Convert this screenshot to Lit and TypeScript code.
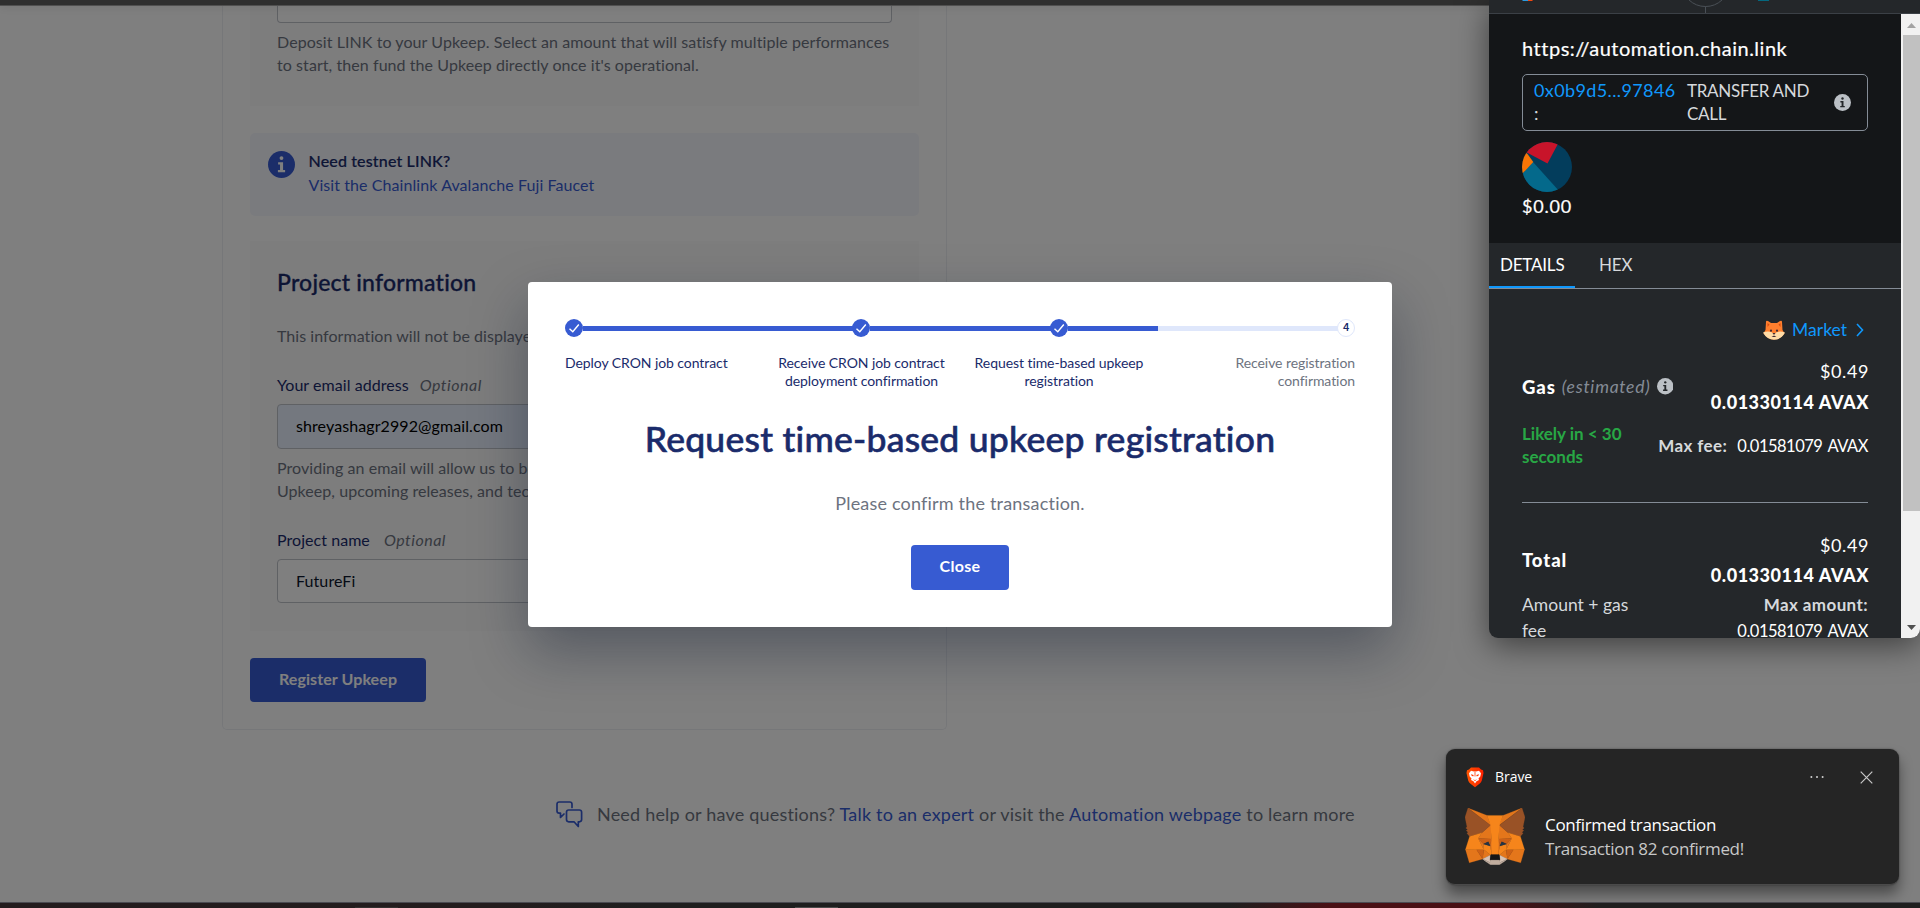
import { LitElement, html, css, svg } from 'lit';
import { customElement } from 'lit/decorators.js';

const FOX: [string, string[]][] = [
  ['#e2761b', ['274.1,35.5 174.6,109.4 193,65.8']],
  ['#e4761b', [
    '44.4,35.5 143.1,110.1 125.6,65.8', '238.3,206.8 211.8,247.4 268.5,263 284.8,207.7',
    '33.9,207.7 50.1,263 106.8,247.4 80.3,206.8', '103.6,138.2 87.8,162.1 144.1,164.6 142.1,104.1',
    '214.9,138.2 175.9,103.4 174.6,164.6 230.8,162.1', '106.8,247.4 140.6,230.9 111.4,208.1',
    '177.9,230.9 211.8,247.4 207.1,208.1']],
  ['#d7c1b3', ['211.8,247.4 177.9,230.9 180.6,253 180.3,262.3', '106.8,247.4 138.3,262.3 138.1,253 140.6,230.9']],
  ['#cd6116', [
    '106.8,247.4 111.6,206.8 80.3,207.7', '207,206.8 211.8,247.4 238.3,207.7',
    '230.8,162.1 174.6,164.6 179.8,193.5 188.1,176.1 208.1,185.2',
    '110.6,185.2 130.6,176.1 138.8,193.5 144.1,164.6 87.8,162.1']],
  ['#e4751f', [
    '87.8,162.1 111.4,208.1 110.6,185.2', '208.1,185.2 207.1,208.1 230.8,162.1',
    '144.1,164.6 138.8,193.5 145.4,227.6 146.9,182.7', '174.6,164.6 171.9,182.6 173.1,227.6 179.8,193.5']],
  ['#f6851b', ['179.8,193.5 173.1,227.6 177.9,230.9 207.1,208.1 208.1,185.2', '110.6,185.2 111.4,208.1 140.6,230.9 145.4,227.6 138.8,193.5']],
  ['#233447', ['138.8,193.5 110.6,185.2 130.5,176.1', '179.7,193.5 188,176.1 208,185.2']],
  ['#c0ad9e', ['180.3,262.3 180.6,253 178.1,250.8 140.4,250.8 138.1,253 138.3,262.3 106.8,247.4 117.8,256.4 140.1,271.9 178.4,271.9 200.8,256.4 211.8,247.4']],
  ['#161616', ['177.9,230.9 173.1,227.6 145.4,227.6 140.6,230.9 138.1,253 140.4,250.8 178.1,250.8 180.6,253']],
  ['#995226', [
    '278.3,114.2 286.8,73.4 274.1,35.5 177.9,106.9 214.9,138.2 267.2,153.5 278.8,140 273.8,136.4 281.8,129.1 275.6,124.3 283.6,118.2',
    '31.8,73.4 40.3,114.2 34.9,118.2 42.9,124.3 36.8,129.1 44.8,136.4 39.8,140 51.3,153.5 103.6,138.2 140.6,106.9 44.4,35.5']],
  ['#f6851b', [
    '267.2,153.5 214.9,138.2 230.8,162.1 207.1,208.1 238.3,207.7 284.8,207.7',
    '103.6,138.2 51.3,153.5 33.9,207.7 80.3,207.7 111.4,208.1 87.8,162.1',
    '174.6,164.6 177.9,106.9 193.1,65.8 125.6,65.8 140.6,106.9 144.1,164.6 145.3,182.8 145.4,227.6 173.1,227.6 173.3,182.8']],
];

const infoIcon = (size: number, disc: string, glyph: string) => html`
  <svg width=${size} height=${size} viewBox="0 0 24 24">
    <circle cx="12" cy="12" r="12" fill=${disc} />
    <circle cx="12" cy="6.3" r="1.7" fill=${glyph} />
    <path d="M9 10h4.400v6.800h1.800v2H8.800v-2h1.900v-4.800H9z" fill=${glyph} />
  </svg>`;

@customElement('upkeep-page')
class UpkeepPage extends LitElement {
  static styles = css`
    :host { display: block; width: 1920px; height: 903px; background: #fff; color: #6d7380;
      font: 16px/24px Lato, sans-serif; letter-spacing: .05px; box-sizing: border-box; padding-top: 6px; overflow: hidden; }
    * { box-sizing: border-box; }
    .card { width: 725px; height: 724px; margin-left: 222px; padding: 0 27px; border: 1px solid #edeff3; border-top: 0; border-radius: 0 0 5px 5px; }
    .section { background: #fafafb; padding: 0 27px; }
    .funding { height: 100px; }
    .help { line-height: 23.400px; white-space: pre; }
    .funding .help { letter-spacing: .07px; }
    .input { height: 44.500px; border: 1px solid #bfc2c9; border-radius: 4px; background: #fff; color: #0c162c;
      padding: 0 18px; line-height: 41px; letter-spacing: .09px; }
    .input.amount { height: 16.500px; border-top: 0; border-radius: 0 0 4px 4px; margin-bottom: 7px; width: 615px; }
    .input.filled { background: #e8f0fe; color: #000; }
    .notice { display: flex; gap: 13.500px; height: 83px; margin: 27px 0 25px; padding: 15px 0 0 18px; background: #f5f7fd; border-radius: 5px; }
    .notice svg { margin-top: 3px; }
    .notice p { margin: 0; line-height: 24px; }
    .notice .strong { padding-top: 1px; }
    .strong { color: #1a2b6b; font-weight: 500; letter-spacing: .15px; -webkit-text-stroke: .2px #1a2b6b; }
    .link { color: #375bd2; }
    .notice .link { letter-spacing: .08px; }
    .project { height: 390px; padding-top: 26px; }
    h2 { margin: 0 0 27px; font-size: 23px; line-height: 30px; font-weight: 500; color: #1a2b6b; letter-spacing: .2px; -webkit-text-stroke: .3px #1a2b6b; }
    .label { color: #1a2b6b; display: flex; gap: 11px; margin: 25px 0 7px; }
    .label i { color: #6d7380; letter-spacing: .5px; }
    .label.name { margin: 26px 0 6.500px; gap: 14px; }
    .input + .help { margin-top: 7px; }
    .register { margin-top: 27px; width: 176px; height: 44px; border-radius: 4px; background: #375bd2; color: #fff; font-weight: 700;
      text-align: center; line-height: 42px; letter-spacing: .09px; }
    .footer { display: flex; gap: 14px; align-items: center; height: 28px; margin: 70.500px 0 0 556px; font-size: 18px; letter-spacing: .2px; }
    .footer span { position: relative; }
    .footer > span { padding-bottom: 2px; }
  `;
  render() {
    return html`
      <div class="card">
        <div class="section funding">
          <div class="input amount"></div>
          <div class="help">Deposit LINK to your Upkeep. Select an amount that will satisfy multiple performances
to start, then fund the Upkeep directly once it's operational.</div>
        </div>
        <div class="notice">
          ${infoIcon(27, '#375bd2', '#fff')}
          <div><p class="strong">Need testnet LINK?</p><p class="link">Visit the Chainlink Avalanche Fuji Faucet</p></div>
        </div>
        <div class="section project">
          <h2>Project information</h2>
          <div>This information will not be displayed</div>
          <div class="label">Your email address <i>Optional</i></div>
          <div class="input filled">shreyashagr2992@gmail.com</div>
          <div class="help">Providing an email will allow us to be
Upkeep, upcoming releases, and tech</div>
          <div class="label name">Project name <i>Optional</i></div>
          <div class="input">FutureFi</div>
        </div>
        <div class="register">Register Upkeep</div>
      </div>
      <div class="footer">
        <svg width="27" height="27" viewBox="0 0 27 27" fill="none" stroke="#375bd2" stroke-width="1.7" stroke-linejoin="round" stroke-linecap="round">
          <path d="M16 6.500V3.200Q16 1 13.800 1H3.200Q1 1 1 3.200V10Q1 12.200 3.200 12.200H4.500V16.500L8 13" />
          <path d="M12.700 9H23.300Q25.600 9 25.600 11.200V18.600Q25.600 20.800 23.300 20.800H22.300V25.500L18 20.800H12.700Q10.500 20.800 10.500 18.600V11.200Q10.500 9 12.700 9Z" />
        </svg>
        <span>Need help or have questions? <span class="link">Talk to an expert</span> or visit the <span class="link">Automation webpage</span> to learn more</span>
      </div>`;
  }
}

@customElement('progress-dialog')
class ProgressDialog extends LitElement {
  static styles = css`
    :host { display: block; box-sizing: border-box; width: 864px; height: 345px; padding: 37px 37px 0; background: #fff; border-radius: 4px;
      box-shadow: 0 24px 56px rgba(12, 22, 44, .36); font-family: Lato, sans-serif; text-align: center; }
    .track { display: flex; align-items: center; height: 18px; }
    .dot { width: 18px; height: 18px; border-radius: 50%; background: #375bd2; flex: none; }
    .dot svg { display: block; }
    .dot.next { background: #fff; border: 1px solid #dfe7fb; box-sizing: border-box; color: #1a2b6b; font: 600 10px/15px Inter, sans-serif; }
    .bar { height: 5px; background: #375bd2; margin: 0 -.5px; }
    .long { width: 270px; }
    .short { width: 181px; }
    .half { width: 90.500px; margin-right: 0; }
    .rest { flex: 1; background: #dfe7fb; margin-left: 0; }
    .labels { display: grid; grid-template-columns: 198px 197px 198px 197px; margin-top: 16.500px; font-size: 14px; line-height: 18.300px; color: #1a2b6b; letter-spacing: -.07px; white-space: pre; }
    .first { text-align: left; }
    .last { text-align: right; color: #6d7380; }
    h1 { margin: 27px 0 28px; font-size: 35.500px; line-height: 44px; font-weight: 500; color: #1a2b6b; letter-spacing: .24px; -webkit-text-stroke: .6px #1a2b6b; }
    p { margin: 0 0 27.500px; font-size: 18px; line-height: 28px; color: #6d7380; letter-spacing: .19px; }
    .close { width: 98px; height: 45px; margin: 0 auto; border-radius: 4px; background: #375bd2; color: #fff; font-size: 16px; font-weight: 700; line-height: 42px; letter-spacing: .3px; }
  `;
  render() {
    const done = html`<span class="dot"><svg width="18" height="18" fill="none" stroke="#fff" stroke-width="1.400"><path d="M4.500 9.700L7.800 12.800L13.800 5.500" /></svg></span>`;
    return html`
      <div class="track">${done}<span class="bar long"></span>${done}<span class="bar short"></span>${done}<span class="bar half"></span><span class="bar rest"></span><span class="dot next">4</span></div>
      <div class="labels">
        <span class="first">Deploy CRON job contract</span>
        <span>Receive CRON job contract
deployment confirmation</span>
        <span>Request time-based upkeep
registration</span>
        <span class="last">Receive registration
confirmation</span>
      </div>
      <h1>Request time-based upkeep registration</h1>
      <p>Please confirm the transaction.</p>
      <div class="close">Close</div>`;
  }
}

@customElement('wallet-popup')
class WalletPopup extends LitElement {
  static styles = css`
    :host { display: flex; flex-direction: column; width: 431px; height: 638px; overflow: hidden; background: #24272a; color: #fff;
      border-radius: 0 0 9px 9px; box-shadow: 0 8px 32px rgba(0, 0, 0, .5); font: 17.500px/24px Lato, sans-serif; white-space: nowrap; }
    * { box-sizing: border-box; }
    svg { display: block; flex: none; }
    .header { height: 14px; border-bottom: 1px solid #3b4046; flex: none; }
    .frame { display: flex; height: 624px; }
    .view { width: 412px; }
    .summary { height: 229px; background: #141618; padding: 20px 33px 0; }
    .origin { font-size: 20px; line-height: 28px; letter-spacing: .52px; -webkit-text-stroke: .2px #fff; }
    .method { display: flex; align-items: center; width: 346px; height: 57px; margin: 12px 0 11px; border: 1px solid #848c96; border-radius: 5px;
      padding: 0 16px 0 11px; line-height: 23px; color: #d6d9dc; font-size: 17px; letter-spacing: -.3px; white-space: pre; }
    .address, .name { padding-bottom: 2px; }
    .address { width: 153px; letter-spacing: .38px; font-size: 18px; }
    .blue { color: #1098fc; }
    .name { flex: 1; }
    .value { font-size: 18px; margin-top: 2px; letter-spacing: .8px; -webkit-text-stroke: .2px #fff; }
    .tabs { display: flex; height: 46px; border-bottom: 1px solid #848c96; font-size: 17px; line-height: 44px; letter-spacing: -.2px; }
    .tab { padding: 0 11px; height: 45px; width: 86px; color: #d6d9dc; }
    .tab + .tab { padding-left: 24px; }
    .active { color: #fff; border-bottom: 2px solid #1098fc; }
    .details { padding: 29px 33px 0; }
    .row { display: flex; justify-content: space-between; align-items: center; }
    .market { justify-content: flex-end; gap: 7px; height: 24px; padding-right: 4px; margin-bottom: 13.500px; }
    .market span { margin-right: 2px; }
    .lead { display: flex; align-items: center; font-weight: 900; font-size: 18.500px; letter-spacing: .9px; }
    .lead i { font-weight: 400; font-size: 17.500px; color: #848c96; margin: 0 6px 0 6px; letter-spacing: .75px; }
    .sum { text-align: right; font-size: 18px; line-height: 31px; letter-spacing: .6px; margin-right: -1px; }
    .sum b { display: block; font-weight: 900; letter-spacing: .55px; }
    .timing { margin-top: 4px; height: 46px; }
    .speed { color: #28a745; font-weight: 700; font-size: 17px; line-height: 23px; white-space: pre; letter-spacing: 0; }
    .fee { display: flex; gap: 10px; padding-top: 2px; }
    .fee b, .amount b { color: #d6d9dc; font-size: 17px; letter-spacing: .4px; }
    .fee span, .amount .num { font-size: 16.500px; letter-spacing: -.5px; word-spacing: 2px; }
    .total { margin-top: 34px; border-top: 1px solid #848c96; padding-top: 27px; }
    .total .sum { line-height: 30px; }
    .amount { align-items: flex-start; line-height: 26.500px; margin-top: 2px; color: #d6d9dc; white-space: pre; }
    .amount div + div { text-align: right; }
    .num { color: #fff; }
    .scrollbar { width: 19px; background: #f1f1f1; display: flex; flex-direction: column; align-items: flex-end; justify-content: space-between; }
    .scrollbar svg { width: 17px; }
    .thumb { width: 17px; height: 476px; background: #c1c1c1; margin-bottom: 106px; }
  `;
  render() {
    return html`
      <div class="header">
        <svg width="431" height="13" fill="none">
          <rect x="33.500" y="0" width="5.500" height="1" fill="#2a9be0" /><rect x="39" y="0" width="4.500" height="1" fill="#f5470f" />
          <rect x="269" y="0" width="11" height="1" fill="#04687f" />
          <path d="M200 0Q207 6.500 216.500 6.500T233 0M216.500 6.500V13" stroke="#4a5056" />
        </svg>
      </div>
      <div class="frame">
        <div class="view">
          <div class="summary">
            <div class="origin">https://automation.chain.link</div>
            <div class="method">
              <div class="address"><span class="blue">0x0b9d5...97846</span>
:</div>
              <div class="name">TRANSFER AND
CALL</div>
              ${infoIcon(17, '#bbc0c5', '#24272a')}
            </div>
            <svg width="50" height="50" viewBox="0 0 50 50">
              <clipPath id="disc"><circle cx="25" cy="25" r="25" /></clipPath>
              <g clip-path="url(#disc)">
                <rect width="50" height="50" fill="#033d5c" />
                <path d="M11 20L38 50H0V32z" fill="#04698b" />
                <path d="M0 8L5.500 12L11.300 20L0 32z" fill="#f97505" />
                <path d="M0 8L25.500 21.500L38 -2H0z" fill="#c8142a" />
              </g>
            </svg>
            <div class="value">$0.00</div>
          </div>
          <div class="tabs"><span class="tab active">DETAILS</span><span class="tab">HEX</span></div>
          <div class="details">
            <div class="row market">
              <svg width="22" height="20" viewBox="0 0 22 20">
                <path d="M3 2Q3 0 5 1L8 3H14L17 1Q19 0 19 2L19.500 10Q21 12 21.500 13.500Q17 19.500 11 19.500T.5 13.500Q1 12 2.500 10z" fill="#ff7f2e" />
                <path d="M4.500 3L6.500 4.500L4.500 7zM17.500 3L15.500 4.500L17.500 7z" fill="#d94f10" />
                <path d="M0 12.500Q7 10 11 14Q15 10 22 12.500Q18 19.800 11 19.800T0 12.500z" fill="#ffdca7" />
                <circle cx="8" cy="10.700" r="1.100" fill="#402a32" /><circle cx="14" cy="10.700" r="1.100" fill="#402a32" />
                <path d="M9.500 13H12.500L11 15zM8.500 17L11 15.500L13.500 17" fill="#402a32" />
              </svg>
              <span class="blue">Market</span>
              <svg width="8" height="14" fill="none" stroke="#1098fc" stroke-width="1.600"><path d="M1 1L6.500 7L1 13" /></svg>
            </div>
            <div class="row">
              <div class="lead">Gas<i>(estimated)</i>${infoIcon(16.5, '#bbc0c5', '#24272a')}</div>
              <div class="sum">$0.49<b>0.01330114 AVAX</b></div>
            </div>
            <div class="row timing">
              <div class="speed">Likely in &lt; 30
seconds</div>
              <div class="fee"><b>Max fee:</b><span>0.01581079 AVAX</span></div>
            </div>
            <div class="total">
              <div class="row">
                <div class="lead">Total</div>
                <div class="sum">$0.49<b>0.01330114 AVAX</b></div>
              </div>
              <div class="row amount">
                <div>Amount + gas
fee</div>
                <div><b>Max amount:</b>
<span class="num">0.01581079 AVAX</span></div>
              </div>
            </div>
          </div>
        </div>
        <div class="scrollbar">
          <svg height="21"><path d="M4 14L8.500 9L13 14z" fill="#a3a3a3" /></svg>
          <div class="thumb"></div>
          <svg height="21"><path d="M4 8L8.500 13L13 8z" fill="#505050" /></svg>
        </div>
      </div>`;
  }
}

@customElement('system-toast')
class SystemToast extends LitElement {
  static styles = css`
    :host { display: block; box-sizing: border-box; width: 453px; height: 136px; padding: 17px 19px 0; border-radius: 9px; background: #252525; color: #fff;
      border-bottom: 1px solid #4a4a4a; box-shadow: 0 9px 14px rgba(0, 0, 0, .42), 0 0 2px rgba(0, 0, 0, .4); font-family: "Open Sans", sans-serif; white-space: nowrap; }
    .bar { display: flex; align-items: center; height: 22px; font-size: 14px; letter-spacing: -.05px; }
    .app { flex: 1; margin-left: 11px; margin-top: -2px; }
    .bar svg:first-child { margin-left: 1px; }
    .dots { margin-right: 36px; }
    .close { margin-right: 7px; }
    .body { display: flex; gap: 20px; margin-top: 20px; }
    .text { margin-top: 5px; font-size: 17px; line-height: 24px; letter-spacing: -.33px; }
    .dim { color: #c8c8c8; }
  `;
  render() {
    return html`
      <div class="bar">
        <svg width="18" height="21" viewBox="0 0 18 21">
          <defs><linearGradient id="flame"><stop stop-color="#ff5500" /><stop offset="1" stop-color="#ff2000" /></linearGradient></defs>
          <path d="M5 .5H13L15 2.500L17 3.200L17.500 6L15.800 13.500Q15.300 15.500 13.500 16.800L9 20.300L4.500 16.800Q2.700 15.500 2.200 13.500L.5 6L1 3.200L3 2.500z" fill="url(#flame)" />
          <path d="M5 3.800L8 4.400H10L13 3.800L15 6.200L14.300 9.500L12.500 11.500L13 13L10.500 14.300L9 16.500L7.500 14.300L5 13L5.500 11.500L3.700 9.500L3 6.200z" fill="#fff" />
          <path d="M5 7.200L7.700 7.900L7.200 9.600L5.400 8.500zM13 7.200L10.300 7.900L10.800 9.600L12.600 8.500zM7 12L9 13.200L11 12L9 14.200zM8.600 5H9.400V9.500H8.600z" fill="#ff3a00" />
        </svg>
        <span class="app">Brave</span>
        <svg class="dots" width="14" height="4" fill="#d0d0d0"><circle cx="1.400" cy="2" r="1" /><circle cx="7" cy="2" r="1" /><circle cx="12.600" cy="2" r="1" /></svg>
        <svg class="close" width="13" height="13" stroke="#c8c8c8" stroke-width="1.200"><path d="M.7 .7L12.300 12.300M12.300 .7L.7 12.300" /></svg>
      </div>
      <div class="body">
        <svg width="60" height="57" viewBox="31.800 35 255 237.500" preserveAspectRatio="none">
          ${FOX.map(([fill, shapes]) => shapes.map((points) => svg`<polygon points=${points} fill=${fill} stroke=${fill} />`))}
        </svg>
        <div class="text"><div>Confirmed transaction</div><div class="dim">Transaction 82 confirmed!</div></div>
      </div>`;
  }
}

@customElement('app-root')
class AppRoot extends LitElement {
  static styles = css`
    :host { display: block; position: relative; width: 1920px; height: 908px; overflow: hidden; }
    .backdrop { position: absolute; inset: 0 0 5px; background: rgba(0, 0, 0, .5); }
    .browser { position: absolute; inset: 0 0 auto; height: 6px; background: #2f2f2f; border-bottom: 1px solid #505050; box-sizing: border-box; box-shadow: 0 1px 8px rgba(0, 0, 0, .1); }
    .taskbar { height: 6px; margin-top: -1px; box-sizing: border-box; border-top: 1px solid #4b4b52; position: relative;
      background: linear-gradient(90deg, #241c1e 0, #241d1e 500px, #1f1f1f 650px, #1f1f1f 1230px, #4a1015 1330px, #4a1015 1500px, #1f1f1f 1600px); }
    .running { position: absolute; left: 795px; bottom: 0; width: 43px; height: 1px; background: #4c4c4c; }
    .running.idle { left: 355px; background: #343030; }
    progress-dialog { position: absolute; left: 528px; top: 282px; }
    wallet-popup { position: absolute; left: 1489px; top: 0; }
    system-toast { position: absolute; left: 1446px; top: 749px; }
  `;
  render() {
    return html`
      <upkeep-page></upkeep-page>
      <div class="backdrop"></div>
      <progress-dialog></progress-dialog>
      <div class="browser"></div>
      <wallet-popup></wallet-popup>
      <system-toast></system-toast>
      <div class="taskbar"><span class="running idle"></span><span class="running"></span></div>`;
  }
}
